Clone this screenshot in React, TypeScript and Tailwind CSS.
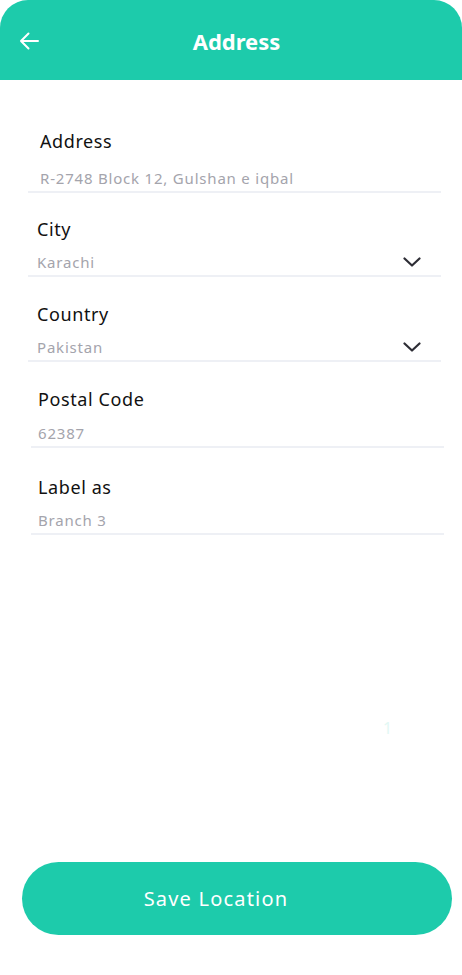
import React from 'react';

const teal = 'bg-[#1dcbab]';

interface FieldProps {
  label: string;
  value: string;
  select?: boolean;
  className?: string;
  valueGap?: string;
  padLeft?: string;
}

const Field: React.FC<FieldProps> = ({ label, value, select, className = '', valueGap = 'mt-[11px]', padLeft = 'pl-[9px]' }) => (
  <div className={className}>
    <div className={`${padLeft} text-[18px] leading-[24px] tracking-[0.6px] text-[#111]`}>{label}</div>
    <div className={`${valueGap} flex items-center justify-between ${padLeft} pr-[20px] pb-[3px] border-b-2 border-[#eef0f5]`}>
      <span className="text-[15px] leading-[20px] tracking-[0.8px] text-[#a4a4ac]">{value}</span>
      {select && (
        <svg width="18" height="10" viewBox="0 0 18 10" fill="none">
          <polyline points="1.5,1.5 9,8.5 16.5,1.5" stroke="#2d2d35" strokeWidth="2.2" strokeLinecap="round" strokeLinejoin="round" />
        </svg>
      )}
    </div>
  </div>
);

export default function App() {
  return (
    <div
      className="relative flex flex-col h-[975px] w-[462px] bg-white"
      style={{ fontFamily: '"Noto Sans", sans-serif' }}
    >
      {/* Header */}
      <div className={`${teal} h-[80px] rounded-t-[28px] flex items-center px-[19px] relative`}>
        <svg width="20" height="18" viewBox="0 0 20 18" fill="none" className="mt-[1px]">
          <path d="M19 9H2M9.5 1.5 2 9l7.5 7.5" stroke="white" strokeWidth="2" strokeLinecap="round" strokeLinejoin="round" />
        </svg>
        <div className="absolute left-0 right-0 text-center text-white text-[22px] font-bold leading-[28px] pointer-events-none ml-[11px] mt-[2px]">
          Address
        </div>
      </div>

      {/* Form */}
      <div className="flex flex-col pt-[49px]">
        <Field label="Address" value="R-2748 Block 12, Gulshan e iqbal" className="ml-[28px] mr-[21px]" padLeft="pl-[12px]" valueGap="mt-[15px]" />
        <Field label="City" value="Karachi" select className="ml-[28px] mr-[21px] mt-[24px]" />
        <Field label="Country" value="Pakistan" select className="ml-[28px] mr-[21px] mt-[25px]" />
        <Field label="Postal Code" value="62387" className="ml-[31px] mr-[18px] mt-[25px]" padLeft="pl-[7px]" valueGap="mt-[12px]" />
        <Field label="Label as" value="Branch 3" className="ml-[31px] mr-[18px] mt-[27px]" padLeft="pl-[7px]" />
      </div>

      <span className="absolute left-[383px] top-[716px] text-[16px] text-[#e3f8f4]">1</span>

      {/* Save button */}
      <div className="mt-auto px-[22px] pb-[40px] pr-[10px]">
        <button className={`${teal} w-[430px] h-[73px] rounded-full flex items-center justify-center pr-[42px] text-white text-[20px] tracking-[1.2px]`}>
          Save Location
        </button>
      </div>
    </div>
  );
}
